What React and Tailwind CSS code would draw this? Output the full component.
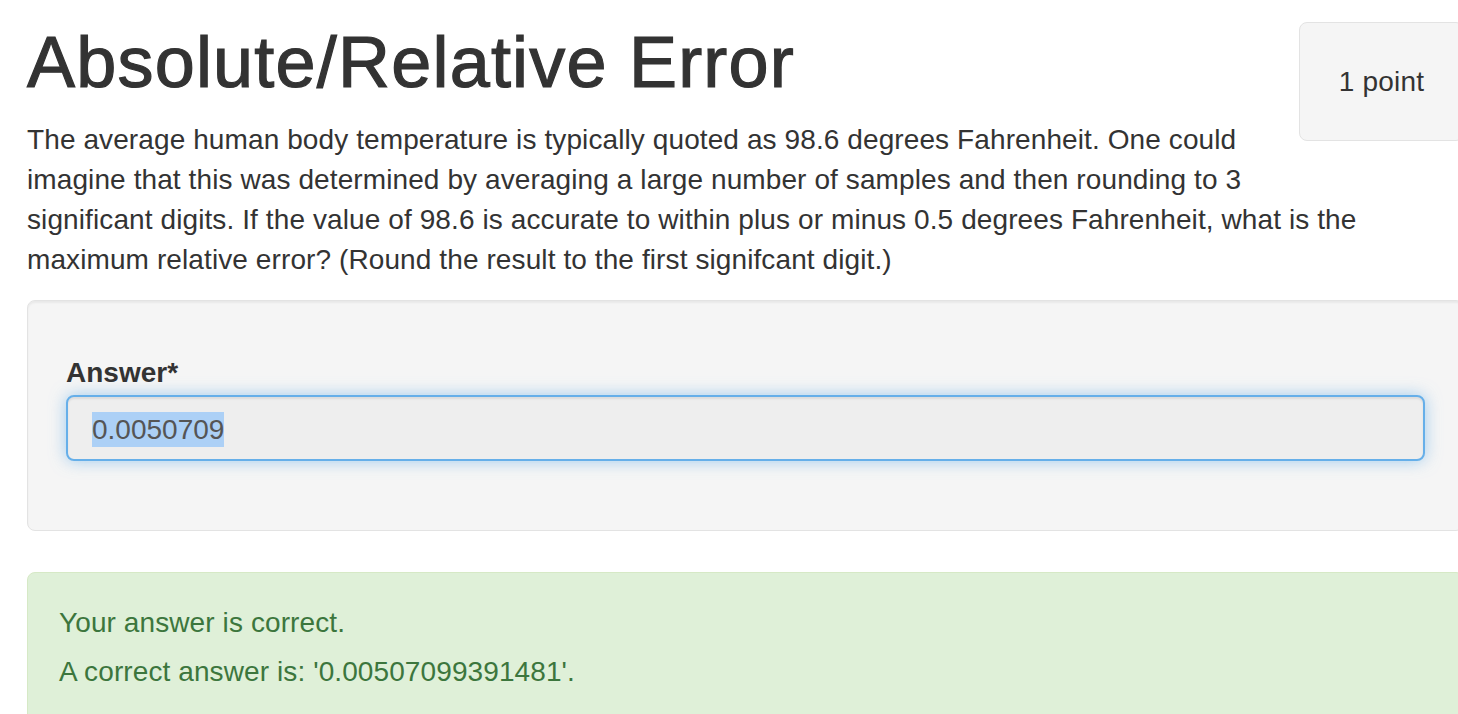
export default function App() {
    return (
        <div className="min-h-screen w-full overflow-hidden bg-white font-['Liberation_Sans',Arial,sans-serif] text-[#333]">
            <div className="w-[1437px] ml-[27px] pt-[22px]">
                {/* points badge */}
                <div className="float-right w-[165px] h-[119px] flex items-center justify-center rounded-lg border border-[#e3e3e3] bg-[#f5f5f5] text-[28px] leading-[40px] tracking-[0.2px]">
                    1 point
                </div>

                <h1 className="text-[72px] leading-[80px] font-normal tracking-[1.2px] [-webkit-text-stroke:1.2px_#333]">
                    Absolute/Relative Error
                </h1>

                <p className="mt-[18px] text-[28px] leading-[40px] tracking-[0.1px]">
                    The average human body temperature is typically quoted as
                    98.6 degrees Fahrenheit. One could
                    <br />
                    imagine that this was determined by averaging a large number
                    of samples and then rounding to 3
                    <br />
                    significant digits. If the value of 98.6 is accurate to
                    within plus or minus 0.5 degrees Fahrenheit, what is the
                    <br />
                    maximum relative error? (Round the result to the first
                    signifcant digit.)
                </p>

                {/* answer well */}
                <div className="clear-both mt-[20px] rounded-lg border border-[#e3e3e3] bg-[#f5f5f5] pt-[52px] pb-[69px] px-[38px] shadow-[inset_0_2px_2px_rgba(0,0,0,0.05)]">
                    <label className="block text-[28px] leading-[40px] font-bold mb-[2px]">
                        Answer*
                    </label>
                    <div className="h-[66px] flex items-center rounded-lg border-2 border-[#66afe9] bg-[#eeeeee] pl-[24px] text-[28px] text-[#555] shadow-[inset_0_2px_2px_rgba(0,0,0,0.075),0_0_16px_rgba(102,175,233,0.6)]">
                        <span className="inline-block h-[35px] leading-[35px] mt-[2px] bg-[#acd0f6]">
                            0.0050709
                        </span>
                    </div>
                </div>

                {/* feedback */}
                <div className="mt-[41px] rounded-lg border border-[#d6e9c6] bg-[#dff0d8] pt-[30px] pb-[30px] pl-[31px] text-[28px] leading-[40px] text-[#3c763d] tracking-[0.1px]">
                    <p>Your answer is correct.</p>
                    <p className="mt-[9px]">
                        A correct answer is: '0.00507099391481'.
                    </p>
                </div>
            </div>
        </div>
    );
}
